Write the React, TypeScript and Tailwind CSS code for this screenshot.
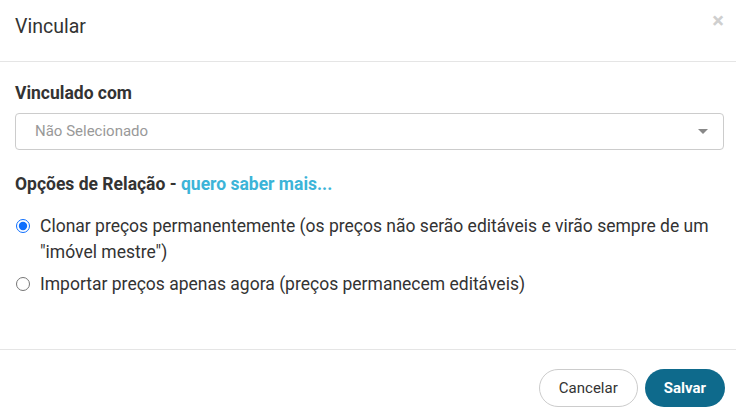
export default function App() {
  return (
    <div
      className="w-[736px] h-[419px] bg-white text-[#333] flex flex-col"
      style={{ fontFamily: "Roboto, 'Liberation Sans', sans-serif" }}
    >
      {/* Header */}
      <div className="h-[62px] border-b border-[#e5e5e5] flex items-start justify-between pl-[15px] pr-[12px]">
        <h4 className="text-[19.5px] leading-[26px] mt-[14px] text-[#333]">Vincular</h4>
        <button className="mt-[8px] text-[#cfcfcf] text-[22px] leading-[26px] font-bold">×</button>
      </div>

      {/* Body */}
      <div className="flex-1 pl-[15px] pr-[12px] pt-[19px]">
        <label className="block text-[17.5px] leading-[24px] font-bold text-[#333] mb-[8px]">
          Vinculado com
        </label>
        <div className="h-[37px] border border-[#ccc] rounded-[4px] flex items-center justify-between pl-[19px] pr-[15px]">
          <span className="text-[15px] text-[#999]">Não Selecionado</span>
          <svg width="10" height="6" viewBox="0 0 10 6">
            <path d="M0 0 L10 0 L5 5 Z" fill="#888" />
          </svg>
        </div>

        <div className="mt-[22px] text-[17.5px] leading-[24px] font-bold text-[#333]">
          Opções de Relação - <a className="text-[#3cb4d8]">quero saber mais...</a>
        </div>

        <div className="mt-[17px] flex flex-col">
          <label className="flex items-start text-[17.5px] leading-[26px] text-[#333]">
            <input
              type="radio"
              name="rel"
              defaultChecked
              className="w-[14px] h-[14px] mt-[6px] ml-[1px] mr-[10px] shrink-0 accent-[#0d6efd]"
            />
            <span>
              Clonar preços permanentemente (os preços não serão editáveis e virão sempre de um "imóvel mestre")
            </span>
          </label>
          <label className="mt-[6px] flex items-start text-[17.5px] leading-[26px] text-[#333]">
            <input
              type="radio"
              name="rel"
              className="w-[14px] h-[14px] mt-[6px] ml-[1px] mr-[10px] shrink-0"
            />
            <span>Importar preços apenas agora (preços permanecem editáveis)</span>
          </label>
        </div>
      </div>

      {/* Footer */}
      <div className="h-[70px] border-t border-[#e5e5e5] flex items-start justify-end gap-[7px] pr-[11px] pt-[19px]">
        <button className="h-[38px] px-[19px] rounded-full border border-[#ccc] bg-white text-[15px] text-[#333]">
          Cancelar
        </button>
        <button className="h-[38px] px-[19px] rounded-full bg-[#0e6a8c] text-[15px] font-bold text-white">
          Salvar
        </button>
      </div>
    </div>
  );
}
